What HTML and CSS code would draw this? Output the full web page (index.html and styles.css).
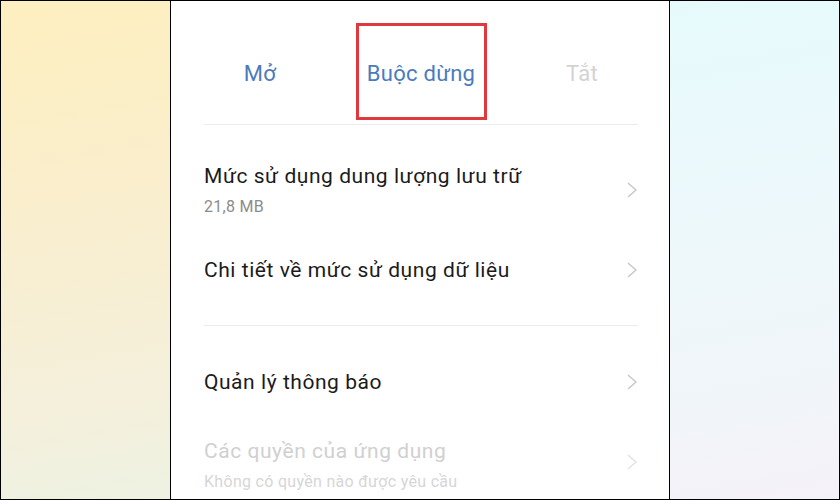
FILE: index.html
```html
<!DOCTYPE html>
<html lang="vi">
<head>
<meta charset="utf-8">
<title>Thông tin ứng dụng</title>
<link rel="stylesheet" href="styles.css">
</head>
<body>
<div class="frame">
  <div class="side side-left"></div>
  <div class="phone">
    <div class="tabs">
      <div class="tab">Mở</div>
      <div class="tab tab-marked">Buộc dừng<span class="mark"></span></div>
      <div class="tab tab-off">Tắt</div>
    </div>
    <div class="divider"></div>
    <div class="list list-first">
      <div class="row">
        <div class="texts">
          <div class="title">Mức sử dụng dung lượng lưu trữ</div>
          <div class="sub">21,8 MB</div>
        </div>
        <svg class="chev" viewBox="0 0 10 16" width="10" height="16"><polyline points="1,1 9,8 1,15"/></svg>
      </div>
      <div class="row">
        <div class="texts">
          <div class="title">Chi tiết về mức sử dụng dữ liệu</div>
        </div>
        <svg class="chev" viewBox="0 0 10 16" width="10" height="16"><polyline points="1,1 9,8 1,15"/></svg>
      </div>
    </div>
    <div class="divider"></div>
    <div class="list list-second">
      <div class="row">
        <div class="texts">
          <div class="title">Quản lý thông báo</div>
        </div>
        <svg class="chev" viewBox="0 0 10 16" width="10" height="16"><polyline points="1,1 9,8 1,15"/></svg>
      </div>
      <div class="row row-off">
        <div class="texts">
          <div class="title">Các quyền của ứng dụng</div>
          <div class="sub">Không có quyền nào được yêu cầu</div>
        </div>
        <svg class="chev" viewBox="0 0 10 16" width="10" height="16"><polyline points="1,1 9,8 1,15"/></svg>
      </div>
    </div>
  </div>
  <div class="side side-right"></div>
</div>
</body>
</html>
```

FILE: styles.css
```css
* { box-sizing: border-box; }
html, body { margin: 0; padding: 0; }
body {
  font-family: Roboto, "Noto Sans", "Liberation Sans", sans-serif;
  background: #fff;
}
.frame {
  width: 840px;
  height: 500px;
  border: 1px solid #000;
  display: flex;
  overflow: hidden;
}
.side { width: 169px; flex: none; }
.side-left {
  background: linear-gradient(170deg, #fdefbf 0%, #f9eecf 45%, #f4f0dc 80%, #eef2e2 100%);
}
.side-right {
  background: linear-gradient(170deg, #e6fafc 0%, #edf8fb 45%, #f1f5fa 80%, #f5f1f8 100%);
}
.phone {
  width: 500px;
  flex: none;
  border-left: 1px solid #000;
  border-right: 1px solid #000;
  background: #fff;
  padding: 0 31px 0 33px;
  overflow: hidden;
}
.tabs {
  display: flex;
  justify-content: center;
  height: 123px;
  padding-top: 60px;
}
.tab {
  width: 161px;
  flex: none;
  text-align: center;
  font-size: 22px;
  letter-spacing: 0.3px;
  line-height: 26px;
  color: #4b7bbd;
  position: relative;
}
.tab-off { color: #d3d3d3; }
.mark {
  position: absolute;
  left: 15px;
  top: -38px;
  width: 131px;
  height: 97px;
  border: 3px solid #e0393d;
}
.divider {
  height: 1px;
  background: #ececec;
}
.list-first { padding-top: 25px; padding-bottom: 15px; }
.list-second { padding-top: 16px; }
.row {
  height: 80px;
  display: flex;
  align-items: center;
  justify-content: space-between;
}
.texts { display: flex; flex-direction: column; gap: 9px; }
.title {
  font-size: 21px;
  letter-spacing: 0.55px;
  line-height: 24px;
  color: #1b1b1b;
}
.sub {
  font-size: 16px;
  letter-spacing: 0.3px;
  line-height: 20px;
  color: #8c8c8c;
}
.chev {
  flex: none;
  fill: none;
  stroke: #c6c6c6;
  stroke-width: 1.4;
  margin-right: 1px;
}
.row-off .texts { padding-top: 6px; }
.row-off .title { color: #d0d0d0; }
.row-off .sub { color: #d6d6d6; }
.row-off .chev { stroke: #e2e2e2; }
```
